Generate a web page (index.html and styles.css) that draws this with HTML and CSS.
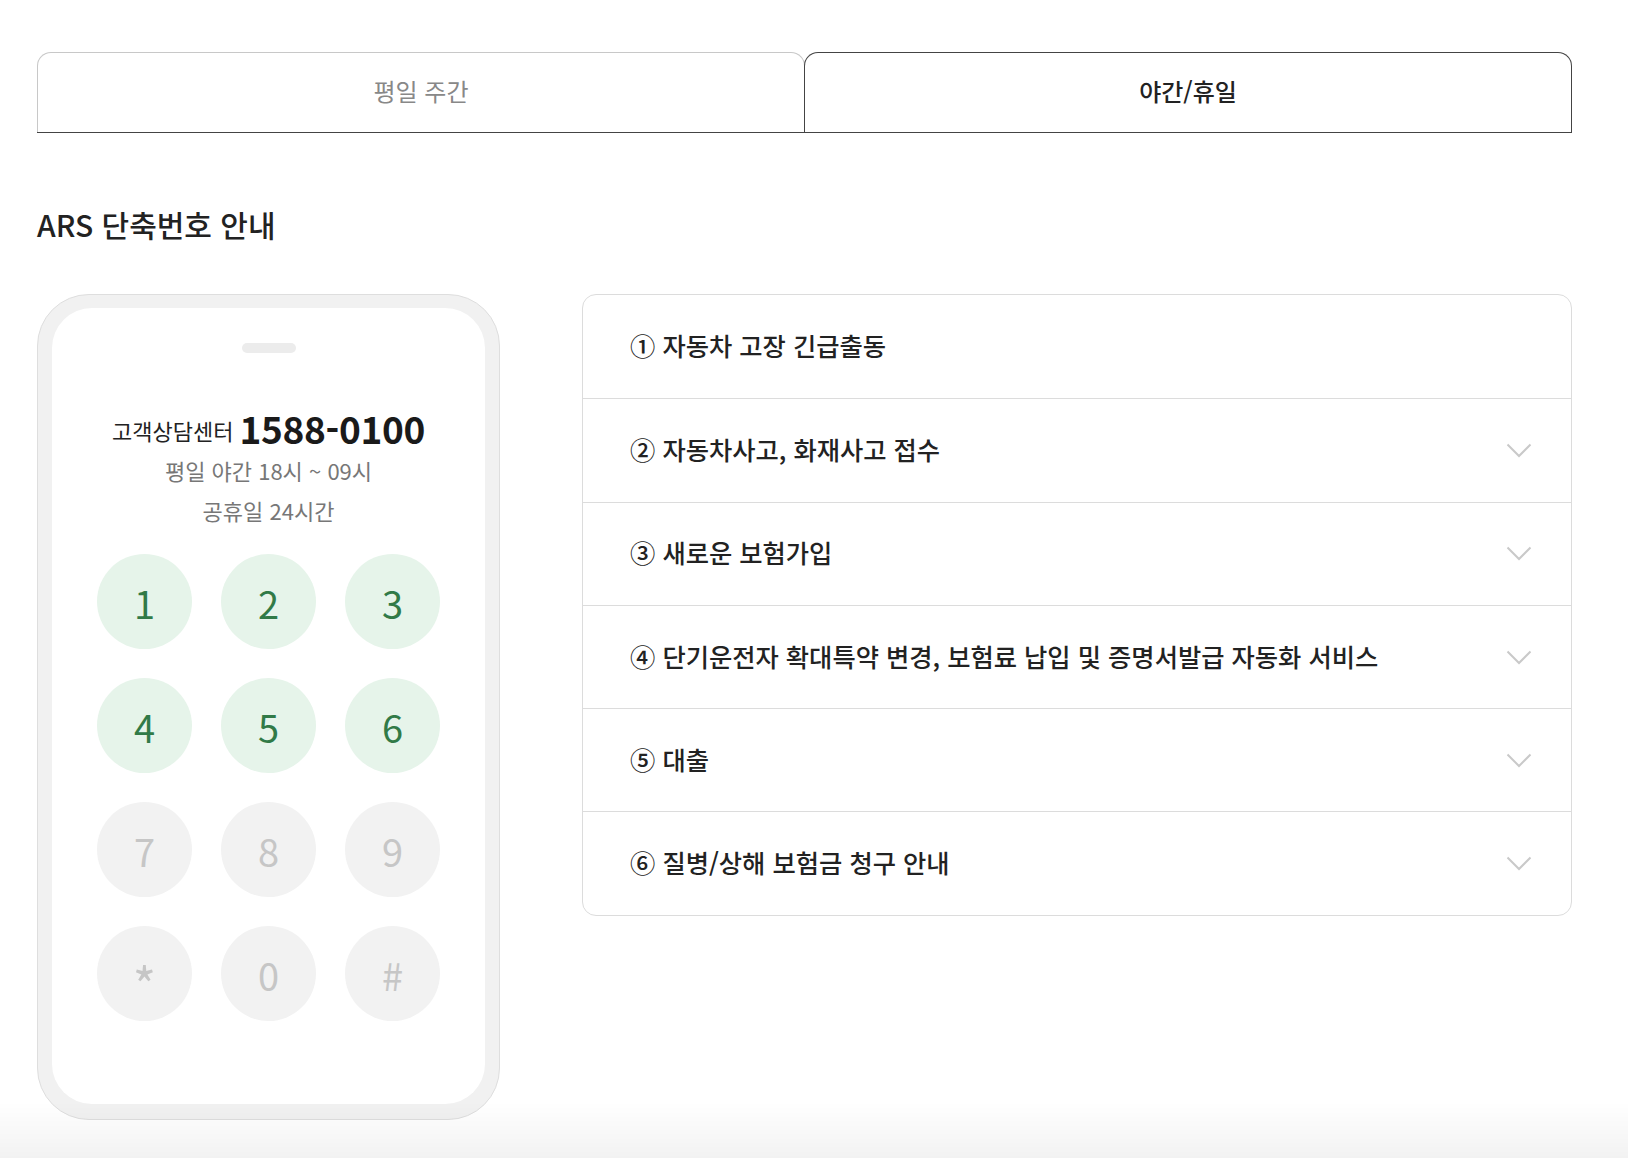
FILE: index.html
```html
<!DOCTYPE html>
<html lang="ko">
<head>
<meta charset="utf-8">
<title>ARS 단축번호 안내</title>
<link rel="stylesheet" href="styles.css">
</head>
<body>
<div class="page">
  <div class="tabs">
    <button class="tab">평일 주간</button>
    <button class="tab tab-active">야간/휴일</button>
  </div>

  <h2 class="title">ARS 단축번호 안내</h2>

  <div class="content">
    <div class="phone">
      <div class="screen">
        <div class="notch"></div>
        <div class="headline"><span class="center-name">고객상담센터</span><span class="center-num">1588-0100</span></div>
        <div class="hours">평일 야간 18시 ~ 09시</div>
        <div class="hours">공휴일 24시간</div>
        <div class="keypad">
          <div class="key key-on">1</div>
          <div class="key key-on">2</div>
          <div class="key key-on">3</div>
          <div class="key key-on">4</div>
          <div class="key key-on">5</div>
          <div class="key key-on">6</div>
          <div class="key">7</div>
          <div class="key">8</div>
          <div class="key">9</div>
          <div class="key key-star">*</div>
          <div class="key">0</div>
          <div class="key">#</div>
        </div>
      </div>
    </div>

    <ul class="menu">
      <li class="item"><span class="item-text">① 자동차 고장 긴급출동</span></li>
      <li class="item"><span class="item-text">② 자동차사고, 화재사고 접수</span>
        <svg class="chev" width="26" height="15" viewBox="0 0 26 15"><polyline points="1.5,1.5 13,13 24.5,1.5" fill="none" stroke="#c9c9c9" stroke-width="2"/></svg></li>
      <li class="item"><span class="item-text">③ 새로운 보험가입</span>
        <svg class="chev" width="26" height="15" viewBox="0 0 26 15"><polyline points="1.5,1.5 13,13 24.5,1.5" fill="none" stroke="#c9c9c9" stroke-width="2"/></svg></li>
      <li class="item"><span class="item-text">④ 단기운전자 확대특약 변경, 보험료 납입 및 증명서발급 자동화 서비스</span>
        <svg class="chev" width="26" height="15" viewBox="0 0 26 15"><polyline points="1.5,1.5 13,13 24.5,1.5" fill="none" stroke="#c9c9c9" stroke-width="2"/></svg></li>
      <li class="item"><span class="item-text">⑤ 대출</span>
        <svg class="chev" width="26" height="15" viewBox="0 0 26 15"><polyline points="1.5,1.5 13,13 24.5,1.5" fill="none" stroke="#c9c9c9" stroke-width="2"/></svg></li>
      <li class="item"><span class="item-text">⑥ 질병/상해 보험금 청구 안내</span>
        <svg class="chev" width="26" height="15" viewBox="0 0 26 15"><polyline points="1.5,1.5 13,13 24.5,1.5" fill="none" stroke="#c9c9c9" stroke-width="2"/></svg></li>
    </ul>
  </div>
</div>
<div class="bottom-fade"></div>
</body>
</html>
```

FILE: styles.css
```css
* { box-sizing: border-box; }

html, body {
  margin: 0;
  padding: 0;
  background: #fff;
  font-family: "Noto Sans CJK KR", "Noto Sans", sans-serif;
  color: #222;
}

.page {
  width: 1535px;
  margin-left: 37px;
  padding-top: 52px;
}

.tabs {
  display: flex;
  border-bottom: 1px solid #444;
}

.tab {
  flex: 1;
  height: 80px;
  display: flex;
  align-items: center;
  justify-content: center;
  background: #fff;
  border: 1px solid #c8c8c8;
  border-bottom: none;
  border-radius: 14px 14px 0 0;
  font-family: inherit;
  font-size: 24px;
  font-weight: 400;
  color: #888;
  padding: 0 0 4px;
  margin: 0;
  cursor: pointer;
}

.tab-active {
  position: relative;
  margin-left: -1px;
  border-color: #444;
  color: #222;
  font-weight: 500;
}

.title {
  margin: 71px 0 0;
  font-size: 30px;
  font-weight: 500;
  line-height: 40px;
  color: #222;
}

.content {
  display: flex;
  align-items: flex-start;
  gap: 82px;
  margin-top: 50px;
}

.phone {
  width: 463px;
  flex: none;
  background: #f1f1f1;
  border: 1px solid #dedede;
  border-radius: 52px;
  padding: 13px 14px 15px;
}

.screen {
  background: #fff;
  border-radius: 40px;
  display: flex;
  flex-direction: column;
  align-items: center;
  padding: 35px 0 83px;
}

.notch {
  width: 54px;
  height: 10px;
  border-radius: 5px;
  background: #ececec;
}

.headline {
  margin-top: 52px;
  height: 46px;
  display: flex;
  align-items: center;
  white-space: nowrap;
}

.center-name {
  font-size: 22px;
  color: #222;
  font-weight: 400;
  padding-top: 4px;
}

.center-num {
  font-size: 37px;
  font-weight: 700;
  color: #1a1a1a;
  margin-left: 6px;
  letter-spacing: -0.3px;
}

.hours {
  font-size: 22px;
  line-height: 39px;
  color: #777;
}

.hours + .hours {
  margin-top: 1px;
}

.keypad {
  margin-top: 24px;
  display: grid;
  grid-template-columns: repeat(3, 95px);
  grid-auto-rows: 95px;
  gap: 29px;
}

.key {
  border-radius: 50%;
  background: #f2f2f2;
  color: #c6c6c6;
  font-size: 38px;
  font-weight: 400;
  display: flex;
  align-items: center;
  justify-content: center;
  padding-top: 2px;
}

.key-on {
  background: #e6f4ea;
  color: #317a47;
}

.key-star {
  font-size: 50px;
  padding-top: 18px;
}

.menu {
  flex: 1;
  list-style: none;
  margin: 0;
  padding: 0;
  border: 1px solid #dcdcdc;
  border-radius: 14px;
}

.item {
  height: 103.3px;
  display: flex;
  align-items: center;
  justify-content: space-between;
  padding: 0 39px 3px 47px;
  border-top: 1px solid #dcdcdc;
}

.item:first-child {
  border-top: none;
}

.item-text {
  font-size: 25.3px;
  font-weight: 500;
  color: #222;
  letter-spacing: 0;
}

.chev {
  flex: none;
  display: block;
  margin-top: 3px;
}

.bottom-fade {
  position: fixed;
  left: 0;
  right: 0;
  bottom: 0;
  height: 56px;
  background: linear-gradient(to bottom, rgba(0,0,0,0), rgba(0,0,0,0.05));
  pointer-events: none;
}
```
